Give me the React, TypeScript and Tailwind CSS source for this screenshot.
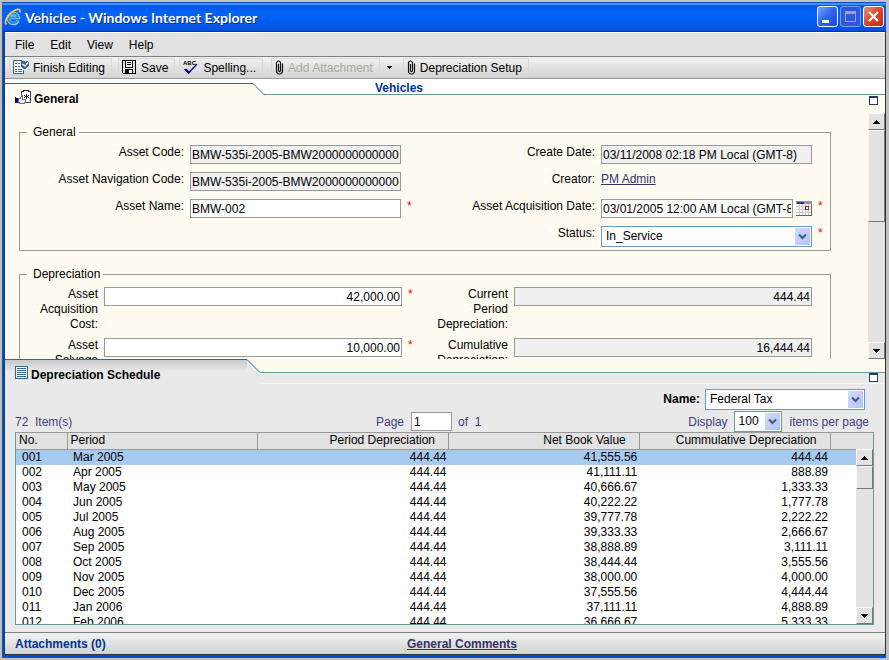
import { useState } from "react";
import type { ReactNode } from "react";

const schedule = [
  ["001", "Mar 2005", "444.44", "41,555.56", "444.44"],
  ["002", "Apr 2005", "444.44", "41,111.11", "888.89"],
  ["003", "May 2005", "444.44", "40,666.67", "1,333.33"],
  ["004", "Jun 2005", "444.44", "40,222.22", "1,777.78"],
  ["005", "Jul 2005", "444.44", "39,777.78", "2,222.22"],
  ["006", "Aug 2005", "444.44", "39,333.33", "2,666.67"],
  ["007", "Sep 2005", "444.44", "38,888.89", "3,111.11"],
  ["008", "Oct 2005", "444.44", "38,444.44", "3,555.56"],
  ["009", "Nov 2005", "444.44", "38,000.00", "4,000.00"],
  ["010", "Dec 2005", "444.44", "37,555.56", "4,444.44"],
  ["011", "Jan 2006", "444.44", "37,111.11", "4,888.89"],
  ["012", "Feb 2006", "444.44", "36,666.67", "5,333.33"],
];

/* Icons */

function IeIcon() {
  return (
    <svg width="18" height="18" viewBox="0 0 18 18" fill="none">
      <path d="M14 12.5A5 5 0 1 1 14.300 9.500H6" stroke="#9fd4fa" strokeWidth="3.600" />
      <path d="M13.500 12.500A4.800 4.800 0 1 1 14 9.500H6" stroke="#2f8fdc" strokeWidth="2.200" />
      <path d="M2.500 16.500C-.5 14 4 5.500 11 2.200c3.500-1.600 5.800-.8 4.800 2.200" stroke="#ffc93c" strokeWidth="1.600" />
    </svg>
  );
}

function FinishIcon() {
  return (
    <svg width="16" height="16" viewBox="0 0 16 16" fill="none" shapeRendering="crispEdges">
      <path d="M8.500.5h-8v13h10v-4" fill="#fff" stroke="#336699" />
      <path d="M2 3h2v1H2zM2 6h2v1H2zM2 9h2v1H2zM2 11h2v1H2zM5 3h2v1H5zM5 6h2v1H5zM5 9h4v1H5zM5 11h4v1H5z" fill="#336699" />
      <path d="M8 1h3l1 1 1-1h2v1h1v4h-1v1h-1v1h-1v1h-3V8H9V7H8z" fill="#336699" />
      <path d="M9.500 4l2.500 2 3-3.500" stroke="#fff" shapeRendering="auto" strokeWidth="1.300" />
    </svg>
  );
}

function SaveIcon() {
  return (
    <svg width="15" height="15" viewBox="0 0 15 15" fill="none" shapeRendering="crispEdges">
      <path d="M.5.5h13v13h-12l-1-1z" fill="#ddd" stroke="#000" />
      <path d="M3.500 1v6h7V1" fill="#fff" stroke="#000" />
      <path d="M5 2.500h4M5 4.500h4" stroke="#000" />
      <path d="M3 9h8v5H3z" fill="#000" />
      <path d="M7 10h3v3H7z" fill="#fff" />
    </svg>
  );
}

function SpellingIcon() {
  return (
    <svg width="16" height="16" viewBox="0 0 16 16" fill="none">
      <text x="0" y="5" fontSize="6" fontWeight="700" fill="#000" fontFamily="Liberation Sans, sans-serif">
        ABC
      </text>
      <path d="M2 9l3.500 4L14 4" stroke="#00008b" strokeWidth="1.300" />
      <path d="M1 9h3l2 2.500L7.500 10v2L5.500 14z" fill="#00008b" />
    </svg>
  );
}

function ClipIcon() {
  return (
    <svg width="9" height="15" viewBox="0 0 9 15" fill="none">
      <path
        d="M3.500 4v6.500a1 1 0 0 0 2 0V3a2 2 0 0 0-2-2 2 2 0 0 0-2 2v8a2.800 2.800 0 0 0 3 3 2.800 2.800 0 0 0 3-3V3.500"
        stroke="#111"
        strokeWidth="1.200"
      />
    </svg>
  );
}

function GeneralIcon() {
  return (
    <svg width="17" height="15" viewBox="0 0 17 15" fill="none" shapeRendering="crispEdges">
      <path d="M6.500 1.500h9v11h-9z" fill="#fff" stroke="#444" />
      <path d="M8 0h6v2H8z" fill="#222" />
      <path d="M9 1h4v1H9z" fill="#fff" />
      <path d="M11 4h1v5h-1zM9 5h1v1H9zM13 5h1v1h-1zM10 6h3v1h-3zM9 7h1v1H9zM13 7h1v1h-1z" fill="#111144" />
      <path d="M3.500 8.500h2l1-3h1v4h3v3h-1v1h-4l-2-1z" fill="#eee" stroke="#777" />
      <path d="M0 7h1v1h2v5H0z" fill="#000080" />
    </svg>
  );
}

function ScheduleIcon() {
  return (
    <svg width="13" height="13" viewBox="0 0 13 13" fill="none" shapeRendering="crispEdges">
      <path d="M.5.5h12v12H.5z" fill="#fff" stroke="#336699" />
      <path d="M2 2h9v1H2zM2 4h9v1H2zM2 6h9v1H2zM2 8h9v1H2zM2 10h9v1H2z" fill="#336699" />
    </svg>
  );
}

function CalendarIcon() {
  return (
    <svg width="16" height="15" viewBox="0 0 16 15" fill="none" shapeRendering="crispEdges">
      <path d="M0 0h16v15H0z" fill="#fff" />
      <path d="M0 5.500h15M0 8.500h15M0 11.500h15M3.500 3v11M6.500 3v11M9.500 3v11M12.500 3v11" stroke="#ccc" />
      <path d="M0 0h16v3H0z" fill="#999" />
      <path d="M1 1h7v2H1z" fill="#333399" />
      <path d="M0 14.500h15.500V3" stroke="#666" />
      <path d="M9.500 5.500h3v3h-3z" fill="#fff" stroke="#993333" />
    </svg>
  );
}

function Arrow({ up }: { up?: boolean }) {
  return (
    <svg width="7" height="4" viewBox="0 0 7 4" shapeRendering="crispEdges">
      <path d={up ? "M3 0h1v1h1v1h1v1h1v1H0V3h1V2h1V1h1z" : "M0 0h7v1H6v1H5v1H4v1H3V3H2V2H1V1H0z"} />
    </svg>
  );
}

/* Controls */

function ScrollBar({ thumb, label }: { thumb: string; label: string }) {
  const raised =
    "w-full shrink-0 border border-t-[#f8f8f8] border-l-[#f8f8f8] border-r-[#777] border-b-[#777] bg-[#e2e2e2]";
  return (
    <div className="flex h-full w-[17px] shrink-0 flex-col bg-[#e2e2e2]">
      <button aria-label={`${label} up`} className={`${raised} flex h-[17px] items-center justify-center`}>
        <Arrow up />
      </button>
      <div className={`${raised} ${thumb}`} />
      <div className="flex-1" />
      <button aria-label={`${label} down`} className={`${raised} flex h-[17px] items-center justify-center`}>
        <Arrow />
      </button>
    </div>
  );
}

function Select({ id, options, className }: { id: string; options: string[]; className: string }) {
  return (
    <span className={`relative block h-[21px] ${className}`}>
      <select id={id} className="h-full w-full appearance-none border border-[#6699cc] bg-white pl-1 text-black">
        {options.map((o) => (
          <option key={o}>{o}</option>
        ))}
      </select>
      <span className="pointer-events-none absolute top-0.5 right-0.5 bottom-0.5 flex w-[15px] items-center justify-center bg-linear-to-br from-[#c5e0fb] via-[#c9c9fa] to-[#a6cbf0]">
        <svg width="9" height="7" viewBox="0 0 9 7" fill="none">
          <path d="M1 1.500l3.500 3.500L8 1.500" stroke="#2f6091" strokeWidth="2" />
        </svg>
      </span>
    </span>
  );
}

function Field({
  id,
  label,
  wide,
  required,
  children,
}: {
  id?: string;
  label: string;
  wide?: boolean;
  required?: boolean;
  children: ReactNode;
}) {
  return (
    <div className="flex items-start">
      <label
        htmlFor={id}
        className={`shrink-0 text-right whitespace-pre-line ${wide ? "w-[78px]" : "w-[164px]"}`}
      >
        {label}
      </label>
      <div className="ml-1.5 flex min-w-0 flex-1 items-center gap-[3px]">{children}</div>
      <span className="w-[18px] shrink-0 pl-1.5 text-[#ff0000]">{required ? "*" : ""}</span>
    </div>
  );
}

function TextBox({ id, value, locked, right }: { id: string; value: string; locked?: boolean; right?: boolean }) {
  return (
    <input
      id={id}
      type="text"
      defaultValue={value}
      readOnly={locked}
      className={`h-[19px] w-full min-w-0 border border-[#999] px-px ${locked ? "bg-[#f0f0f0]" : "bg-white"} ${
        right ? "text-right" : ""
      }`}
    />
  );
}

function ToolButton({ icon, disabled, children }: { icon: ReactNode; disabled?: boolean; children: ReactNode }) {
  return (
    <button
      disabled={disabled}
      className="flex h-[19px] items-center gap-1 border border-[#dadada] pr-1.5 pl-[3px] disabled:text-[#aca899]"
    >
      {icon}
      <span className="pt-px">{children}</span>
    </button>
  );
}

function MaximizeButton({ label }: { label: string }) {
  return <button aria-label={label} className="h-[9px] w-[9px] border border-t-2 border-[#333366] bg-white" />;
}

function TitleBar() {
  return (
    <header className="flex h-[29px] shrink-0 items-center justify-between bg-linear-to-b from-[#0058e0] via-[#0064fa] to-[#0050e0] px-0.5 shadow-[inset_0_1px_0_#0a50c8,inset_0_3px_0_#3a94fa]">
      <div className="flex items-center gap-[3px]">
        <IeIcon />
        <h1 className="pt-0.5 font-['Lato',sans-serif] text-[14px] font-bold text-white [text-shadow:1px_1px_0_#003090]">
          Vehicles - Windows Internet Explorer
        </h1>
      </div>
      <div className="flex gap-0.5">
        <button
          aria-label="Minimize"
          className="flex h-[21px] w-[21px] items-end rounded-[3px] border border-white bg-linear-to-br from-[#7aa5fb] via-[#2f62f0] to-[#1a4be0] pb-[3px] pl-1"
        >
          <span className="h-[3px] w-[7px] bg-white" />
        </button>
        <button
          aria-label="Maximize"
          disabled
          className="flex h-[21px] w-[21px] items-center justify-center rounded-[3px] border border-[#7d9bf0] bg-[#2c58dc]"
        >
          <span className="h-[11px] w-[11px] border border-t-[3px] border-[#9d9fd0]" />
        </button>
        <button
          aria-label="Close"
          className="flex h-[21px] w-[21px] items-center justify-center rounded-[3px] border border-white bg-linear-to-br from-[#e89078] via-[#d8472a] to-[#c02c08]"
        >
          <svg width="11" height="11" viewBox="0 0 11 11">
            <path d="M1 1l9 9M10 1l-9 9" stroke="#fff" strokeWidth="2.200" />
          </svg>
        </button>
      </div>
    </header>
  );
}

function Toolbar() {
  return (
    <div className="flex h-[22px] shrink-0 items-center gap-1 border-b border-[#999] bg-linear-to-b from-[#f2f2f2] to-[#d2d2d2] pl-1">
      <ToolButton icon={<FinishIcon />}>Finish Editing</ToolButton>
      <div className="pl-0.5">
        <ToolButton icon={<SaveIcon />}>Save</ToolButton>
      </div>
      <ToolButton icon={<SpellingIcon />}>Spelling...</ToolButton>
      <div className="flex items-center gap-1 pl-1">
        <ToolButton icon={<ClipIcon />} disabled>
          Add Attachment
        </ToolButton>
        <button aria-label="Attachment options" className="flex h-[19px] items-center px-[3px]">
          <svg width="5" height="3" viewBox="0 0 5 3" shapeRendering="crispEdges">
            <path d="M0 0h5v1H4v1H3v1H2V2H1V1H0z" />
          </svg>
        </button>
      </div>
      <div className="pl-1">
        <ToolButton icon={<ClipIcon />}>Depreciation Setup</ToolButton>
      </div>
    </div>
  );
}

function GeneralPanel() {
  return (
    <section className="shrink-0 bg-[#fffbf0]">
      <div className="flex h-[34px] bg-white">
        <div className="flex w-[248px] flex-col bg-[#fffbf0]">
          <div className="h-1 bg-white" />
          <h2 className="flex flex-1 items-start gap-0.5 border-t border-[#336699] pt-1.5 pl-2.5 font-bold">
            <GeneralIcon />
            <span className="pt-0.5">General</span>
          </h2>
        </div>
        <div className="bg-[#fffbf0]">
          <svg className="bg-white" width="12" height="16" viewBox="0 0 12 16" fill="none">
            <path d="M0 4.500l11 11h1V16H0z" fill="#fffbf0" />
            <path d="M0 4.500l11 11h1" stroke="#336699" />
          </svg>
        </div>
        <div className="flex flex-1 flex-col bg-[#fffbf0]">
          <div className="h-4 border-b border-[#669999] bg-white pt-0.5 pl-[110px] font-bold text-[#003399]">
            Vehicles
          </div>
          <div className="flex justify-end pt-px pr-[7px]">
            <MaximizeButton label="Maximize General" />
          </div>
        </div>
      </div>

      <div className="flex h-[246px]">
        <form className="min-w-0 flex-1 overflow-hidden pt-3 pr-[37px] pl-3.5">
          <fieldset className="border border-[#999] pt-[5px] pb-[3px]">
            <legend className="ml-[7px] pr-[3px] pl-1.5">General</legend>
            <div className="grid grid-cols-2 gap-x-3">
              <div className="flex flex-col gap-2">
                <Field id="code" label="Asset Code:">
                  <TextBox id="code" value="BMW-535i-2005-BMW20000000000000" locked />
                </Field>
                <Field id="nav" label="Asset Navigation Code:">
                  <TextBox id="nav" value="BMW-535i-2005-BMW20000000000000" locked />
                </Field>
                <Field id="name" label="Asset Name:" required>
                  <TextBox id="name" value="BMW-002" />
                </Field>
              </div>
              <div className="flex flex-col gap-2">
                <Field id="created" label="Create Date:">
                  <TextBox id="created" value="03/11/2008 02:18 PM Local (GMT-8)" locked />
                </Field>
                <Field label="Creator:">
                  <a href="#" className="h-[19px] text-[#333366] underline">
                    PM Admin
                  </a>
                </Field>
                <Field id="acquired" label="Asset Acquisition Date:" required>
                  <TextBox id="acquired" value="03/01/2005 12:00 AM Local (GMT-8)" />
                  <button type="button" aria-label="Pick a date" className="shrink-0">
                    <CalendarIcon />
                  </button>
                </Field>
                <Field id="status" label="Status:" required>
                  <Select id="status" options={["In_Service", "Retired"]} className="w-full" />
                </Field>
              </div>
            </div>
          </fieldset>

          <fieldset className="mt-4 border border-[#999] pt-[5px] pb-1">
            <legend className="ml-[7px] pr-[3px] pl-1.5">Depreciation</legend>
            <div className="grid grid-cols-2 gap-x-2.5 gap-y-1.5">
              <Field id="cost" label={"Asset\nAcquisition\nCost:"} wide required>
                <TextBox id="cost" value="42,000.00" right />
              </Field>
              <Field id="current" label={"Current\nPeriod\nDepreciation:"} wide>
                <TextBox id="current" value="444.44" right locked />
              </Field>
              <Field id="salvage" label={"Asset\nSalvage"} wide required>
                <TextBox id="salvage" value="10,000.00" right />
              </Field>
              <Field id="cumulative" label={"Cumulative\nDepreciation:"} wide>
                <TextBox id="cumulative" value="16,444.44" right locked />
              </Field>
            </div>
          </fieldset>
        </form>
        <ScrollBar thumb="h-[92px]" label="Scroll form" />
      </div>
    </section>
  );
}

function SchedulePanel() {
  const [selected, setSelected] = useState("001");

  return (
    <section className="flex min-h-0 flex-1 flex-col bg-[#e9e9e9]">
      <div className="flex h-[30px] shrink-0">
        <h2 className="flex w-[242px] items-start gap-[3px] border-t border-[#336699] bg-linear-to-b from-[#c8c8c8] to-[#e9e9e9] to-40% pt-1.5 pl-2.5 font-bold">
          <ScheduleIcon />
          <span className="pt-0.5">Depreciation Schedule</span>
        </h2>
        <svg className="bg-[#e9e9e9]" width="13" height="14" viewBox="0 0 13 14" fill="none">
          <path d="M0 0h13v13.500L0 .5z" fill="#fffbf0" />
          <path d="M0 .5l13 13" stroke="#336699" />
        </svg>
        <div className="flex flex-1 flex-col">
          <div className="h-3.5 border-b border-[#669999] bg-[#fffbf0]" />
          <div className="flex h-[11px] items-start justify-end border-b border-[#f4f4f4] pr-[7px]">
            <MaximizeButton label="Maximize Depreciation Schedule" />
          </div>
        </div>
      </div>

      <div className="flex items-center justify-end gap-[5px] pr-5">
        <label htmlFor="schedule" className="font-bold">
          Name:
        </label>
        <Select id="schedule" options={["Federal Tax", "State Tax"]} className="w-40" />
      </div>

      <div className="mt-px flex items-center pr-4 pl-2.5 text-[#3f3f7f]">
        <span className="w-[361px] pt-px">72&nbsp; Item(s)</span>
        <label htmlFor="page" className="pt-px">
          Page
        </label>
        <input
          id="page"
          type="text"
          defaultValue="1"
          className="mr-1.5 ml-[7px] h-[19px] w-[41px] border border-[#999] bg-white px-0.5 text-black"
        />
        <span className="pt-px">of&nbsp; 1</span>
        <label htmlFor="size" className="ml-auto pt-px">
          Display
        </label>
        <Select id="size" options={["100", "50", "25"]} className="mr-2 ml-1.5 w-12" />
        <span className="pt-px">items per page</span>
      </div>

      <div className="relative mr-[11px] mb-[7px] ml-2.5 min-h-0 flex-1 overflow-hidden border border-[#669999] border-t-[#999] bg-white">
        <table className="w-full table-fixed border-collapse">
          <thead>
            <tr className="h-4 border-b border-[#999] bg-[#e2e2e2] text-left">
              <th className="w-[51px] border-r border-[#999] p-0 pl-[3px] font-normal">No.</th>
              <th className="border-r border-[#999] p-0 pl-[3px] font-normal">Period</th>
              <th className="border-r border-[#999] p-0 pr-[13px] text-right font-normal">Period Depreciation</th>
              <th className="border-r border-[#999] p-0 pr-[13px] text-right font-normal">Net Book Value</th>
              <th className="border-r border-[#999] p-0 pr-[13px] text-right font-normal">Cummulative Depreciation</th>
              <th className="w-[43px] p-0" />
            </tr>
          </thead>
          <tbody>
            {schedule.map(([no, period, amount, book, total]) => (
              <tr key={no} onClick={() => setSelected(no)} className={no === selected ? "bg-[#a6caf0]" : "bg-white"}>
                <td className="p-0 pl-1.5">{no}</td>
                <td className="p-0 pl-1.5">{period}</td>
                <td className="p-0 pr-0.5 text-right">{amount}</td>
                <td className="p-0 pr-0.5 text-right">{book}</td>
                <td className="p-0 pr-0.5 text-right">{total}</td>
                <td className="p-0" />
              </tr>
            ))}
          </tbody>
        </table>
        <div className="absolute top-4 right-0 bottom-0">
          <ScrollBar thumb="h-[23px]" label="Scroll schedule" />
        </div>
      </div>
    </section>
  );
}

export default function App() {
  return (
    <div className="flex h-screen min-h-[560px] flex-col bg-[#c0c0c0] pt-0.5 pr-[3px] pb-0.5 pl-0.5 font-['Liberation_Sans',Arial,sans-serif] text-[12px] leading-[15px] text-black">
      <TitleBar />
      <div className="flex min-h-0 flex-1 flex-col border-b-[3px] border-l-2 border-[#0050d0]">
        <main className="flex min-h-0 flex-1 flex-col border border-[#333] bg-white pt-px">
          <nav className="flex h-6 shrink-0 items-center gap-4 border-b border-[#808080] bg-[#e2e2e2] pt-px pl-2.5">
            {["File", "Edit", "View", "Help"].map((item) => (
              <button key={item}>{item}</button>
            ))}
          </nav>
          <Toolbar />
          <GeneralPanel />
          <SchedulePanel />
          <footer className="flex h-[22px] shrink-0 items-center border-t border-[#808080] bg-linear-to-b from-[#f2f2f2] to-[#d2d2d2] pt-0.5 pl-2.5 font-bold">
            <span className="w-[392px] text-[#003399]">Attachments (0)</span>
            <a href="#" className="text-[#333366] underline">
              General Comments
            </a>
          </footer>
        </main>
      </div>
    </div>
  );
}
